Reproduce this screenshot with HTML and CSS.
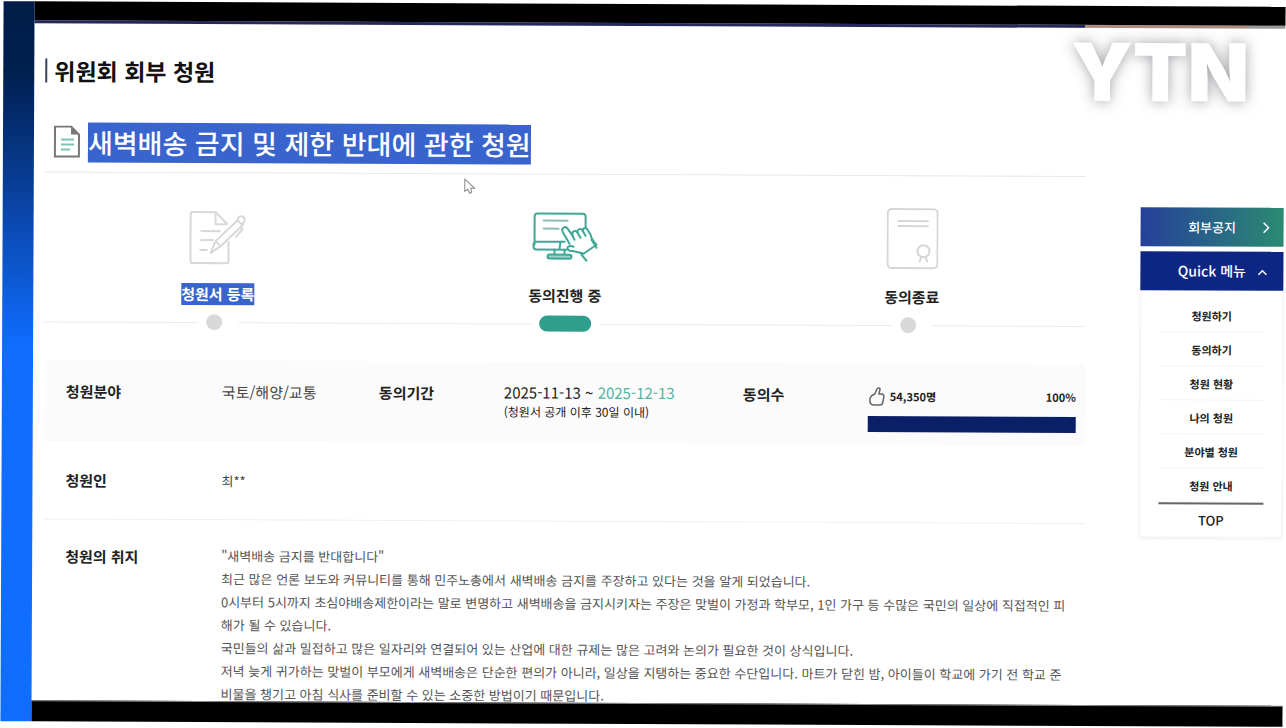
FILE: index.html
```html
<!DOCTYPE html>
<html lang="ko">
<head>
    <meta charset="UTF-8">
    <meta name="viewport" content="width=device-width, initial-scale=1.0">
    <title>위원회 회부 청원</title>
    <link rel="stylesheet" href="styles.css">
</head>
<body>

    <div class="frame">
        <div class="side-bar"></div>

        <div class="screen">
            <div class="top-band"></div>

            <div class="page">
                <main class="content">
                    <h1 class="page-title">위원회 회부 청원</h1>

                    <div class="petition-head">
                        <svg class="doc-icon" viewBox="0 0 28 34" fill="none">
                            <path d="M2 1h16l8 8v22H2z" stroke="#777" stroke-width="2"/>
                            <path d="M18 0l9 9h-9z" fill="#777"/>
                            <path d="M8 14h13M8 19h13M8 24h9" stroke="#7cc5b3" stroke-width="2"/>
                        </svg>
                        <h2 class="petition-title">새벽배송 금지 및 제한 반대에 관한 청원</h2>
                    </div>

                    <ol class="steps">
                        <li class="step">
                            <div class="step-icon">
                                <svg width="64" height="60" viewBox="-4 -4 64 60" fill="none" stroke="#d8d8d8" stroke-width="2" stroke-linejoin="round">
                                    <path d="M38 31v20a2 2 0 0 1-2 2H2a2 2 0 0 1-2-2V4a2 2 0 0 1 2-2h23l12 12"/>
                                    <path d="M25 2v12h12M10 21h20M10 30h13M9 40h8"/>
                                    <path d="M20 43l5-12 22-21 5 5-22 21zM25 31l5 5M47 10l1-3a3 3 0 0 1 5 5l-1 3M50 17l2 2-7 8"/>
                                </svg>
                            </div>
                            <span class="step-label selected">청원서 등록</span>
                            <div class="step-line"><span class="dot"></span></div>
                        </li>
                        <li class="step">
                            <div class="step-icon">
                                <svg width="68" height="52" viewBox="0 0 68 52" fill="none" stroke="#3fa796" stroke-width="2" stroke-linejoin="round" stroke-linecap="round">
                                    <path d="M54 18V5a3 3 0 0 0-3-3H6a3 3 0 0 0-3 3v28M3 30h30M2 32v3a3 3 0 0 0 3 3h30M29 30l-1 7"/>
                                    <path d="M12 9h24M12 17h15" stroke="#8bbcb3"/>
                                    <path d="M23 38v6M33 38v6"/>
                                    <rect x="16" y="43" width="24" height="4" rx="2" fill="#9bd3c8"/>
                                    <path d="M38 32l-7-12c-2-4 3-6 5-3l5 7c-1-5 3-6 5-3c-1-4 4-5 5-2c1-4 4-3 5-1l3 5c1 5 3 7 6 10l-13 9c-4-1-9-3-14-3c-5-3 0-6 4-4" fill="#fff"/>
                                    <path d="M41 24l2 4M46 21l3 5M51 19l3 5M60 28l5 8M50 43l5 6"/>
                                </svg>
                            </div>
                            <span class="step-label">동의진행 중</span>
                            <div class="step-line"><span class="pill"></span></div>
                        </li>
                        <li class="step">
                            <div class="step-icon">
                                <svg width="52" height="62" viewBox="0 0 52 62" fill="none" stroke="#d6d6d6" stroke-width="2">
                                    <rect x="1" y="1" width="50" height="59" rx="4"/>
                                    <path d="M11 13h31M11 18h31"/>
                                    <circle cx="37" cy="43" r="6"/>
                                    <path d="M35 48l-2 6M39 48l2 6"/>
                                </svg>
                            </div>
                            <span class="step-label">동의종료</span>
                            <div class="step-line"><span class="dot"></span></div>
                        </li>
                    </ol>

                    <dl class="info info-summary">
                        <dt>청원분야</dt>
                        <dd>국토/해양/교통</dd>
                        <dt>동의기간</dt>
                        <dd class="period">2025-11-13 ~ <em>2025-12-13</em><small>(청원서 공개 이후 30일 이내)</small></dd>
                        <dt>동의수</dt>
                        <dd>
                            <div class="agree">
                                <svg class="thumb" viewBox="0 0 18 20" fill="none" stroke="#666" stroke-width="1.5" stroke-linejoin="round">
                                    <path d="M7 8l2-5c1-2 4-1 3 1l-1 4h3c2 0 2 2 2 3l-1 5c0 2-1 3-3 3H6c-3 0-4-2-4-5c0-3 2-5 5-6z"/>
                                </svg>
                                <span>54,350명</span>
                                <span class="percent">100%</span>
                            </div>
                            <div class="meter"><div class="meter-fill" style="width: 100%"></div></div>
                        </dd>
                    </dl>

                    <dl class="info info-person">
                        <dt>청원인</dt>
                        <dd>최**</dd>
                    </dl>

                    <dl class="info info-purpose">
                        <dt>청원의 취지</dt>
                        <dd>
                            "새벽배송 금지를 반대합니다"<br>
                            최근 많은 언론 보도와 커뮤니티를 통해 민주노총에서 새벽배송 금지를 주장하고 있다는 것을 알게 되었습니다.<br>
                            0시부터 5시까지 초심야배송제한이라는 말로 변명하고 새벽배송을 금지시키자는 주장은 맞벌이 가정과 학부모, 1인 가구 등 수많은 국민의 일상에 직접적인 피<br>
                            해가 될 수 있습니다.<br>
                            국민들의 삶과 밀접하고 많은 일자리와 연결되어 있는 산업에 대한 규제는 많은 고려와 논의가 필요한 것이 상식입니다.<br>
                            저녁 늦게 귀가하는 맞벌이 부모에게 새벽배송은 단순한 편의가 아니라, 일상을 지탱하는 중요한 수단입니다. 마트가 닫힌 밤, 아이들이 학교에 가기 전 학교 준<br>
                            비물을 챙기고 아침 식사를 준비할 수 있는 소중한 방법이기 때문입니다.
                        </dd>
                    </dl>
                </main>

                <aside class="quick">
                    <a class="notice" href="#">
                        회부공지
                        <svg class="arrow" viewBox="0 0 12 12" fill="none" stroke="#fff" stroke-width="1.5"><path d="M4 1l5 5-5 5"/></svg>
                    </a>
                    <button class="quick-toggle" type="button">
                        Quick 메뉴
                        <svg class="arrow" viewBox="0 0 12 12" fill="none" stroke="#fff" stroke-width="1.5"><path d="M1 9l4-4 4 4"/></svg>
                    </button>
                    <nav class="quick-menu">
                        <a href="#">청원하기</a>
                        <a href="#">동의하기</a>
                        <a href="#">청원 현황</a>
                        <a href="#">나의 청원</a>
                        <a href="#">분야별 청원</a>
                        <a href="#">청원 안내</a>
                        <a class="top-link" href="#">TOP</a>
                    </nav>
                </aside>
            </div>

            <div class="bottom-band"></div>
        </div>

        <svg class="cursor" viewBox="0 0 12 16" fill="#fff" stroke="#888"><path d="M1 1v12l3-2 2 4 2-1-1-4h4z"/></svg>
        <div class="channel-logo">YTN</div>
    </div>

</body>
</html>
```
FILE: styles.css
```css
* {
    box-sizing: border-box;
}

body {
    margin: 0;
    padding: 4px 2px;
    height: 100vh;
    overflow: hidden;
    background: #fff;
    color: #222;
    font-family: "Noto Sans CJK KR", "Noto Sans", sans-serif;
    font-size: 15px;
    line-height: 22px;
}

h1, h2, ol, dl, dd {
    margin: 0;
    padding: 0;
}

a {
    color: inherit;
    text-decoration: none;
}

/* The captured screen leans slightly to the right */
.frame {
    position: relative;
    display: flex;
    height: 100%;
    transform: rotate(0.25deg);
}

.side-bar {
    width: 31px;
    flex-shrink: 0;
    background: linear-gradient(#001c48 0%, #00204f 10%, #0a43a4 28%, #0f6dff 48%);
}

.screen {
    flex: 1;
    min-width: 0;
    display: flex;
    flex-direction: column;
}

.top-band {
    height: 22px;
    flex-shrink: 0;
    background: linear-gradient(90deg, #25285c 84%, #b08d80 84%, #b08d80 97%, #999 97%);
    border-top: 19px solid #000;
}

.bottom-band {
    height: 21px;
    flex-shrink: 0;
    background: #000;
    border-top: 1px solid #888;
}

.page {
    flex: 1;
    min-height: 0;
    overflow: hidden;
    display: flex;
    gap: 55px;
    padding: 35px 1px 0 11px;
}

.content {
    flex: 1;
    min-width: 0;
}

.page-title {
    padding-left: 7px;
    border-left: 2px solid #34435f;
    color: #111;
    font-size: 23px;
    font-weight: 700;
    line-height: 24px;
}

.petition-head {
    display: flex;
    align-items: center;
    gap: 7px;
    margin-top: 40px;
    padding: 0 0 9px 8px;
    border-bottom: 1px solid #e8e8ee;
}

.doc-icon {
    width: 28px;
    height: 34px;
}

.petition-title {
    background: #3964cd;
    color: #fff;
    font-size: 27px;
    font-weight: 500;
    line-height: 40px;
}

.steps {
    display: flex;
    padding: 32px 0 30px;
    list-style: none;
}

.step {
    flex: 1;
    display: flex;
    flex-direction: column;
    align-items: center;
}

.step-icon {
    display: flex;
    align-items: center;
    height: 62px;
}

.step-label {
    margin-top: 16px;
    font-weight: 700;
}

.step-label.selected {
    background: #3964cd;
    color: #fff;
}

.step-line {
    align-self: stretch;
    display: flex;
    align-items: center;
    gap: 8px;
    height: 16px;
    margin-top: 9px;
}

.step-line::before,
.step-line::after {
    content: "";
    flex: 1;
    height: 1px;
    background: #ebebeb;
}

.dot {
    width: 16px;
    height: 16px;
    margin-right: 8px;
    border-radius: 50%;
    background: #d8d8d8;
}

.pill {
    width: 52px;
    height: 16px;
    border-radius: 8px;
    background: #2f9e8c;
}

.info {
    display: grid;
    grid-template-columns: 156fr 854fr;
    padding: 0 9px 0 22px;
}

.info dt {
    font-weight: 700;
}

.info dd {
    min-width: 0;
    color: #444;
}

.info-summary {
    grid-template-columns: 156fr 157fr 125fr 239fr 125fr 208fr;
    padding-top: 21px;
    padding-bottom: 13px;
    background: #fbfbfb;
}

.info-summary .period {
    color: #222;
    line-height: 20px;
}

.period em {
    color: #55b3a0;
    font-style: normal;
}

.period small {
    display: block;
    font-size: 12px;
    line-height: 18px;
}

.agree {
    display: flex;
    align-items: center;
    gap: 4px;
    height: 24px;
    color: #222;
    font-size: 11px;
    font-weight: 700;
}

.thumb {
    width: 18px;
    height: 20px;
}

.percent {
    margin-left: auto;
}

.meter {
    height: 16px;
    margin-top: 8px;
    background: #e5e5e5;
}

.meter-fill {
    height: 100%;
    background: #0b1f69;
}

.info-person {
    padding-top: 28px;
    padding-bottom: 27px;
    border-bottom: 1px solid #f0f0f0;
}

.info-person dd {
    font-size: 13px;
}

.info-purpose {
    padding-top: 24px;
}

.info-purpose dt {
    padding-top: 2px;
}

.info-purpose dd {
    color: #555;
    font-size: 13px;
    line-height: 23px;
    white-space: nowrap;
}

.quick {
    width: 143px;
    flex-shrink: 0;
    margin-top: 144px;
}

.notice,
.quick-toggle {
    position: relative;
    display: block;
    width: 100%;
    height: 39px;
    padding: 0;
    border: 0;
    color: #fff;
    font-family: inherit;
    font-weight: 500;
    line-height: 39px;
    text-align: center;
}

.notice {
    background: linear-gradient(90deg, #26409a, #2b8a72);
    font-size: 13px;
}

.quick-toggle {
    margin-top: 5px;
    background: #0e2683;
    font-size: 14px;
}

.arrow {
    position: absolute;
    top: 14px;
    right: 12px;
    width: 12px;
    height: 12px;
}

.quick-toggle .arrow {
    right: 14px;
}

.quick-menu {
    display: flex;
    flex-direction: column;
    padding: 8px 18px 0;
    border: 1px solid #f5f5f5;
    border-top: 0;
    box-shadow: 0 1px 4px rgba(0, 0, 0, 0.08);
    font-size: 11px;
    font-weight: 700;
    text-align: center;
}

.quick-menu a {
    height: 34px;
    border-bottom: 1px solid #f6f6f6;
    line-height: 34px;
}

.quick-menu .top-link {
    border-top: 2px solid #666;
    border-bottom: 0;
    font-size: 13px;
    font-weight: 500;
    line-height: 32px;
}

.cursor {
    position: absolute;
    top: 175px;
    left: 461px;
    width: 12px;
    height: 16px;
}

.channel-logo {
    position: absolute;
    top: 26px;
    right: 36px;
    color: #fff;
    font-family: Inter, sans-serif;
    font-size: 80px;
    font-weight: 900;
    line-height: 80px;
    text-shadow: 0 0 14px rgba(70, 70, 80, 0.5);
}
```
